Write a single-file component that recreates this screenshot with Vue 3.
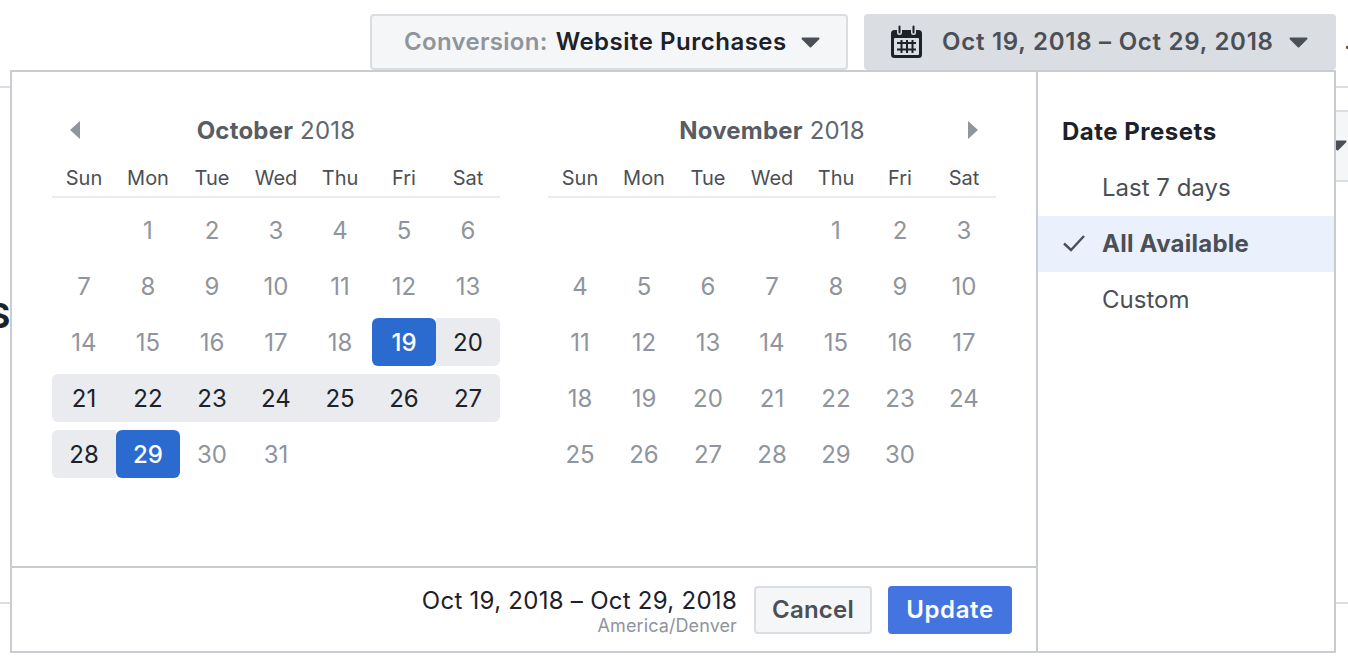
<script setup>
const weekdays = ['Sun', 'Mon', 'Tue', 'Wed', 'Thu', 'Fri', 'Sat']

function buildDays(leading, count) {
  const cells = []
  for (let i = 0; i < leading; i++) cells.push({ key: 'e' + i, label: '' })
  for (let d = 1; d <= count; d++) cells.push({ key: 'd' + d, label: d })
  return cells
}

function octClass(cell, index) {
  const d = cell.label
  if (!d) return ''
  if (d === 19 || d === 29) return 'edge'
  if (d > 19 && d < 29) {
    const col = index % 7
    return {
      range: true,
      'round-r': col === 6,
      'round-l': col === 0
    }
  }
  return ''
}

const october = buildDays(1, 31)
const november = buildDays(4, 30)
const presets = [
  { label: 'Last 7 days', active: false },
  { label: 'All Available', active: true },
  { label: 'Custom', active: false }
]
</script>

<template>
  <div class="page">
    <header class="topbar">
      <button class="btn conversion">
        <span class="muted">Conversion:</span>
        <span class="strong">Website Purchases</span>
        <svg class="caret" viewBox="0 0 19 11" width="19" height="11" aria-hidden="true">
          <path d="M1.500 1.500h16l-8 8z" fill="#4b4f56" stroke="#4b4f56" stroke-width="2" stroke-linejoin="round"/>
        </svg>
      </button>
      <button class="btn range-btn">
        <svg class="cal-icon" viewBox="0 0 31 33" width="31" height="33" aria-hidden="true">
          <path d="M3.500 5H6v2.500a2.500 2.500 0 0 0 5 0V5h9v2.500a2.500 2.500 0 0 0 5 0V5h2.500A3.500 3.500 0 0 1 31 8.500V29.500a3.500 3.500 0 0 1-3.500 3.500h-24A3.500 3.500 0 0 1 0 29.500V8.500A3.500 3.500 0 0 1 3.500 5z" fill="#1d2129"/>
          <rect x="3" y="13" width="25" height="17" rx="1" fill="#dadde1"/>
          <path d="M8.500 1.500v6M22.500 1.500v6" stroke="#1d2129" stroke-width="2" stroke-linecap="round"/>
          <path d="M6 18h19M6 24.500h19M10.500 15v13M16 15v13M21.500 15v13" stroke="#1d2129" stroke-width="2"/>
        </svg>
        <span class="range-text">Oct 19, 2018 – Oct 29, 2018</span>
        <svg class="caret" viewBox="0 0 19 11" width="19" height="11" aria-hidden="true">
          <path d="M1.500 1.500h16l-8 8z" fill="#4b4f56" stroke="#4b4f56" stroke-width="2" stroke-linejoin="round"/>
        </svg>
      </button>
      <span class="peek">.</span>
    </header>

    <div class="rule first"></div>
    <div class="toolbar">
      <svg class="caret peek-caret" viewBox="0 0 19 11" width="19" height="11" aria-hidden="true">
        <path d="M1.500 1.500h16l-8 8z" fill="#4b4f56" stroke="#4b4f56" stroke-width="2" stroke-linejoin="round"/>
      </svg>
    </div>
    <div class="word">S</div>
    <div class="rule last"></div>

    <section class="panel">
      <div class="main">
        <div class="calendars">
          <div class="month">
            <div class="month-head">
              <span class="arrow left"></span>
              <div class="month-title"><b>October</b> 2018</div>
            </div>
            <div class="weekdays">
              <span v-for="w in weekdays" :key="w">{{ w }}</span>
            </div>
            <div class="days">
              <span
                v-for="(cell, i) in october"
                :key="cell.key"
                class="day"
                :class="octClass(cell, i)"
              >{{ cell.label }}</span>
            </div>
          </div>
          <div class="month">
            <div class="month-head">
              <div class="month-title"><b>November</b> 2018</div>
              <span class="arrow right"></span>
            </div>
            <div class="weekdays">
              <span v-for="w in weekdays" :key="w">{{ w }}</span>
            </div>
            <div class="days">
              <span v-for="cell in november" :key="cell.key" class="day">{{ cell.label }}</span>
            </div>
          </div>
        </div>
        <footer class="footer">
          <div class="summary">
            <div class="summary-date">Oct 19, 2018 – Oct 29, 2018</div>
            <div class="summary-zone">America/Denver</div>
          </div>
          <button class="action cancel">Cancel</button>
          <button class="action update">Update</button>
        </footer>
      </div>
      <aside class="presets">
        <h3 class="presets-title">Date Presets</h3>
        <div
          v-for="p in presets"
          :key="p.label"
          class="preset"
          :class="{ active: p.active }"
        >
          <svg v-if="p.active" class="check" viewBox="0 0 24 18" width="24" height="18" aria-hidden="true">
            <path d="M2 9.500l7 6.500L22 2" fill="none" stroke="#4b4f56" stroke-width="2.400"/>
          </svg>
          {{ p.label }}
        </div>
      </aside>
    </section>
  </div>
</template>

<style scoped>
.page {
  position: relative;
  width: 1348px;
  height: 662px;
  overflow: hidden;
  background: #fff;
  font-family: Inter, "Liberation Sans", sans-serif;
  color: #1d2129;
}
.topbar {
  display: flex;
  justify-content: flex-end;
  align-items: center;
  gap: 16px;
  height: 56px;
  padding: 14px 12px 0 0;
}
.btn {
  display: flex;
  align-items: center;
  height: 56px;
  border-radius: 4px;
  font: 600 24px/1 Inter, "Liberation Sans", sans-serif;
  box-sizing: border-box;
}
.conversion {
  width: 478px;
  padding: 0 26px 0 32px;
  background: #f5f6f7;
  border: 2px solid #dadde1;
}
.muted { color: #90949c; margin-right: 8px; letter-spacing: 0.3px; }
.strong { color: #1d2129; letter-spacing: 0.5px; }
.conversion .caret { margin-left: auto; }
.range-btn {
  width: 472px;
  padding: 0 28px 0 27px;
  background: #dadde1;
  border: 0;
}
.cal-icon { flex: none; margin-top: -1px; }
.range-text { color: #4b4f56; margin-left: 20px; letter-spacing: 0.75px; }
.range-btn .caret { margin-left: auto; }
.caret { display: block; flex: none; }
.peek {
  position: absolute;
  left: 1344px;
  top: 26px;
  font-size: 24px;
  color: #4b4f56;
}
.rule { height: 2px; background: #dadde1; }
.rule.first { margin-top: 16px; }
.toolbar {
  display: flex;
  justify-content: flex-end;
  align-items: center;
  width: 400px;
  height: 68px;
  margin: 22px 0 0 auto;
  background: #f5f6f7;
  border-top: 2px solid #dadde1;
  border-bottom: 2px solid #dadde1;
}
.peek-caret { margin-right: 1px; margin-top: -1px; }
.word {
  margin-top: 114px;
  margin-left: -12px;
  font-weight: 700;
  font-size: 34px;
  line-height: 40px;
}
.rule.last { margin-top: 266px; }

.panel {
  position: absolute;
  left: 10px;
  top: 70px;
  width: 1326px;
  height: 583px;
  box-sizing: border-box;
  display: flex;
  background: #fff;
  border: 2px solid #c9ccd1;
}
.main {
  width: 1024px;
  display: flex;
  flex-direction: column;
}
.calendars {
  flex: 1;
  display: flex;
  gap: 48px;
  padding: 0 40px;
}
.month { width: 448px; }
.month-head {
  position: relative;
  display: flex;
  justify-content: center;
  align-items: center;
  height: 58px;
  padding-top: 29px;
}
.month-title {
  font-size: 24px;
  color: #606770;
  letter-spacing: 0.2px;
}
.month-title b { font-weight: 700; color: #585c63; }
.arrow {
  position: absolute;
  top: 49px;
  width: 0;
  height: 0;
  border-top: 9.500px solid transparent;
  border-bottom: 9.500px solid transparent;
}
.arrow.left { left: 18px; border-right: 10px solid #90949c; }
.arrow.right { right: 18px; border-left: 10px solid #90949c; }
.weekdays {
  display: grid;
  grid-template-columns: repeat(7, 64px);
  height: 37px;
  align-items: center;
  border-bottom: 2px solid #e9ebee;
  font-size: 20px;
  color: #4b4f56;
  text-align: center;
}
.days {
  display: grid;
  grid-template-columns: repeat(7, 64px);
  grid-auto-rows: 48px;
  row-gap: 8px;
  margin-top: 8px;
}
.day {
  display: flex;
  align-items: center;
  justify-content: center;
  font-size: 24px;
  color: #90949c;
}
.day.range {
  background: #e9ebee;
  color: #1d2129;
}
.day.round-l { border-radius: 6px 0 0 6px; }
.day.round-r { border-radius: 0 6px 6px 0; }
.day.edge {
  background: #2b6acf;
  color: #fff;
  font-weight: 500;
  border-radius: 6px;
}
.footer {
  display: flex;
  align-items: center;
  justify-content: flex-end;
  height: 83px;
  padding-right: 24px;
  border-top: 2px solid #c9ccd1;
}
.summary { text-align: right; margin-right: 17px; padding-top: 2px; }
.summary-date { font-size: 24px; line-height: 30px; color: #1d2129; letter-spacing: 0.27px; }
.summary-zone { font-size: 18px; line-height: 20px; color: #90949c; letter-spacing: 0.1px; }
.action {
  height: 48px;
  border-radius: 4px;
  font: 600 24px/1 Inter, "Liberation Sans", sans-serif;
  letter-spacing: 0.2px;
  box-sizing: border-box;
}
.cancel {
  width: 118px;
  margin-right: 16px;
  background: #f5f6f7;
  border: 2px solid #dadde1;
  color: #4b4f56;
}
.update {
  width: 124px;
  background: #4374e0;
  border: 0;
  color: #fff;
  letter-spacing: 0.6px;
}
.presets {
  flex: 1;
  border-left: 2px solid #c9ccd1;
  padding-top: 44px;
}
.presets-title {
  margin: 0 0 0 24px;
  height: 44px;
  font-size: 24px;
  line-height: 32px;
  font-weight: 700;
  letter-spacing: 0.5px;
  color: #1d2129;
}
.preset {
  position: relative;
  height: 56px;
  padding-left: 64px;
  font-size: 24px;
  line-height: 56px;
  color: #4b4f56;
}
.preset.active {
  background: #eaf1fd;
  font-weight: 700;
  letter-spacing: 0.25px;
}
.check {
  position: absolute;
  left: 24px;
  top: 18px;
}
</style>
<style>
html, body { margin: 0; background: #fff; }
</style>
